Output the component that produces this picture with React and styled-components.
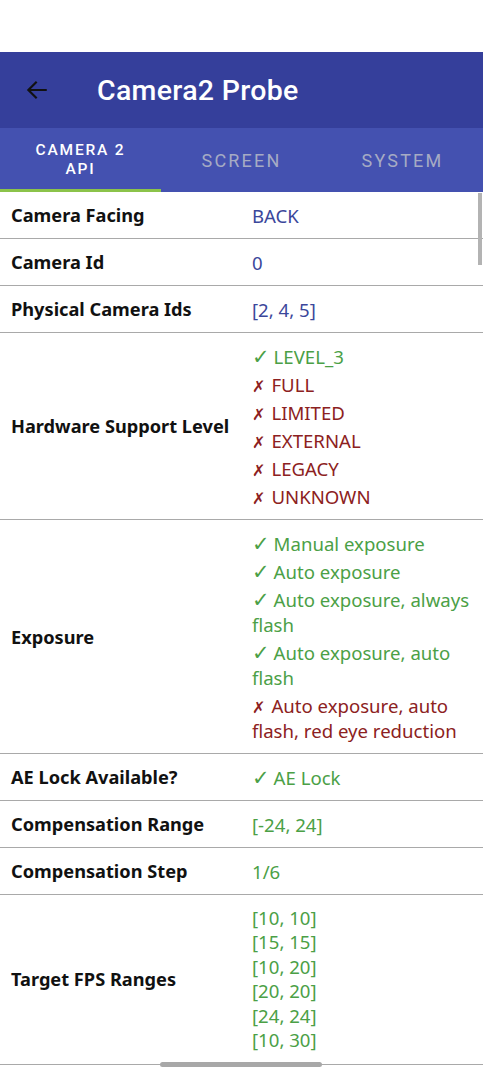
import styled, { createGlobalStyle } from "styled-components";

const GlobalStyle = createGlobalStyle`
  html, body {
    margin: 0;
    padding: 0;
    background: #ffffff;
  }
  body {
    font-family: "Noto Sans", "DejaVu Sans", sans-serif;
    width: 483px;
    overflow: hidden;
  }
`;

const Screen = styled.div`
  position: relative;
  width: 483px;
  height: 1080px;
  background: #fff;
  overflow: hidden;
`;

const StatusArea = styled.div`
  height: 52px;
  background: #fff;
`;

const AppBar = styled.header`
  height: 76px;
  background: #353f9b;
  display: flex;
  align-items: center;
  padding-left: 24px;
  gap: 47px;
`;

const Title = styled.h1`
  margin: 0;
  font-family: Roboto, "Noto Sans", sans-serif;
  font-weight: 500;
  font-size: 28.5px;
  color: #fff;
  letter-spacing: 0.3px;
`;

const TabBar = styled.nav`
  height: 64px;
  background: #4451b0;
  display: grid;
  grid-template-columns: repeat(3, 1fr);
`;

const Tab = styled.div`
  display: flex;
  align-items: center;
  justify-content: center;
  text-align: center;
  font-family: Roboto, "Noto Sans", sans-serif;
  font-weight: ${(p) => (p.$active ? 500 : 400)};
  font-size: ${(p) => (p.$active ? "15.5px" : "18px")};
  line-height: 19px;
  letter-spacing: ${(p) => (p.$active ? "1.8px" : "2.2px")};
  color: ${(p) => (p.$active ? "#ffffff" : "#a6abc4")};
  border-bottom: 3px solid ${(p) => (p.$active ? "#8bc34a" : "transparent")};
  padding-top: 3px;
`;

const Table = styled.div`
  display: flex;
  flex-direction: column;
`;

const Row = styled.div`
  display: grid;
  grid-template-columns: 252px 1fr;
  align-items: center;
  padding: 10.5px 0;
  border-bottom: 1px solid #a9a9a9;
`;

const Label = styled.div`
  padding-left: 11px;
  font-family: "Noto Sans", sans-serif;
  font-weight: 700;
  font-size: 18.2px;
  color: #111;
`;

const Values = styled.div`
  display: flex;
  flex-direction: column;
  gap: ${(p) => (p.$tight ? "0" : "3px")};
  padding-right: 3px;
`;

const Value = styled.div`
  font-family: "Noto Sans", sans-serif;
  font-size: 18.6px;
  line-height: ${(p) => (p.$tight ? "24.6px" : "25px")};
  color: ${(p) =>
    p.$tone === "ok" ? "#4ba046" : p.$tone === "bad" ? "#8c2121" : "#3b479b"};
`;

const Mark = styled.span`
  font-family: "DejaVu Sans", sans-serif;
  font-weight: 700;
  font-size: ${(p) => (p.$ok ? "21px" : "16px")};
  line-height: 0;
  margin-right: ${(p) => (p.$ok ? "4px" : "6px")};
`;

const ScrollThumb = styled.div`
  position: absolute;
  right: 1px;
  top: 193px;
  width: 4px;
  height: 72px;
  background: #b3b3b3;
`;

const HomeBar = styled.div`
  position: absolute;
  left: 160px;
  bottom: 13px;
  width: 162px;
  height: 5px;
  border-radius: 3px;
  background: #a8a8a8;
`;

const BackArrow = () => (
  <svg width="26" height="26" viewBox="0 0 24 24" fill="none">
    <path
      d="M20 12H4.5M11 5l-7 7 7 7"
      stroke="#111"
      strokeWidth="2"
      strokeLinecap="square"
    />
  </svg>
);

const Item = ({ ok, children }) => (
  <Value $tone={ok ? "ok" : "bad"}>
    <Mark $ok={ok}>{ok ? "✓" : "✗"}</Mark>
    {children}
  </Value>
);

const fpsRanges = ["[10, 10]", "[15, 15]", "[10, 20]", "[20, 20]", "[24, 24]", "[10, 30]"];

export default function App() {
  return (
    <>
      <GlobalStyle />
      <Screen>
        <StatusArea />
        <AppBar>
          <BackArrow />
          <Title>Camera2 Probe</Title>
        </AppBar>
        <TabBar>
          <Tab $active>
            CAMERA 2
            <br />
            API
          </Tab>
          <Tab>SCREEN</Tab>
          <Tab>SYSTEM</Tab>
        </TabBar>
        <Table>
          <Row>
            <Label>Camera Facing</Label>
            <Values>
              <Value>BACK</Value>
            </Values>
          </Row>
          <Row>
            <Label>Camera Id</Label>
            <Values>
              <Value>0</Value>
            </Values>
          </Row>
          <Row>
            <Label>Physical Camera Ids</Label>
            <Values>
              <Value>[2, 4, 5]</Value>
            </Values>
          </Row>
          <Row>
            <Label>Hardware Support Level</Label>
            <Values>
              <Item ok>LEVEL_3</Item>
              <Item>FULL</Item>
              <Item>LIMITED</Item>
              <Item>EXTERNAL</Item>
              <Item>LEGACY</Item>
              <Item>UNKNOWN</Item>
            </Values>
          </Row>
          <Row>
            <Label>Exposure</Label>
            <Values>
              <Item ok>Manual exposure</Item>
              <Item ok>Auto exposure</Item>
              <Item ok>Auto exposure, always flash</Item>
              <Item ok>Auto exposure, auto flash</Item>
              <Item>Auto exposure, auto flash, red eye reduction</Item>
            </Values>
          </Row>
          <Row>
            <Label>AE Lock Available?</Label>
            <Values>
              <Item ok>AE Lock</Item>
            </Values>
          </Row>
          <Row>
            <Label>Compensation Range</Label>
            <Values>
              <Value $tone="ok">[-24, 24]</Value>
            </Values>
          </Row>
          <Row>
            <Label>Compensation Step</Label>
            <Values>
              <Value $tone="ok">1/6</Value>
            </Values>
          </Row>
          <Row>
            <Label>Target FPS Ranges</Label>
            <Values $tight>
              {fpsRanges.map((r) => (
                <Value key={r} $tone="ok" $tight>
                  {r}
                </Value>
              ))}
            </Values>
          </Row>
        </Table>
        <ScrollThumb />
        <HomeBar />
      </Screen>
    </>
  );
}
